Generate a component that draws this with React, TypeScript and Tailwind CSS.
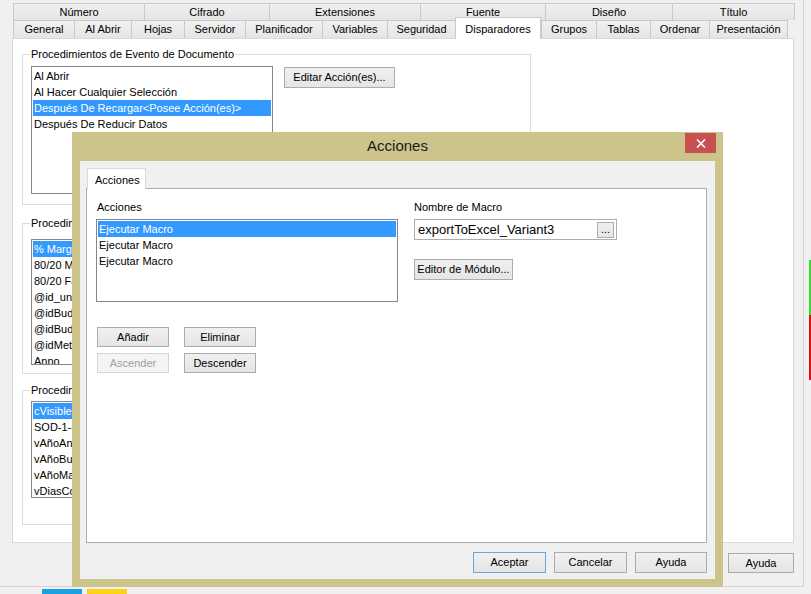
import React from "react";

const row1: [string, string][] = [
  ["Número", "w-[131px]"],
  ["Cifrado", "w-[125px]"],
  ["Extensiones", "w-[151px]"],
  ["Fuente", "w-[125px]"],
  ["Diseño", "w-[127px]"],
  ["Título", "w-[123px]"],
];

const row2: [string, string][] = [
  ["General", "w-[61px]"],
  ["Al Abrir", "w-[57px]"],
  ["Hojas", "w-[53px]"],
  ["Servidor", "w-[61px]"],
  ["Planificador", "w-[77px]"],
  ["Variables", "w-[65px]"],
  ["Seguridad", "w-[68px]"],
  ["Disparadores", "w-[86px]"],
  ["Grupos", "w-[55px]"],
  ["Tablas", "w-[54px]"],
  ["Ordenar", "w-[59px]"],
  ["Presentación", "w-[79px]"],
];

type BtnProps = {
  children: React.ReactNode;
  className?: string;
  disabled?: boolean;
  primary?: boolean;
};

function Btn({ children, className = "", disabled, primary }: BtnProps) {
  let look = "border-[#acacac] bg-linear-to-b from-[#f0f0f0] to-[#e5e5e5] text-black";
  if (disabled) look = "border-[#d5d5d5] bg-[#f4f4f4] text-[#a0a0a0]";
  if (primary) look = "border-[#6aa6e0] bg-linear-to-b from-[#f0f0f0] to-[#e5e5e5] text-black";
  return (
    <div className={`flex items-center justify-center border text-[11px] leading-none ${look} ${className}`}>
      {children}
    </div>
  );
}

// items starting with "*" are drawn selected
function ListBox({ items, className = "" }: { items: string[]; className?: string }) {
  return (
    <div className={`border border-[#828790] bg-white overflow-hidden p-px ${className}`}>
      {items.map((it, i) => (
        <div
          key={i}
          className={`h-[16px] leading-[16px] pl-[1px] whitespace-nowrap ${
            it.startsWith("*") ? "bg-[#3399ff] text-white" : ""
          }`}
        >
          {it.replace(/^\*/, "")}
        </div>
      ))}
    </div>
  );
}

function Group({ title, className = "", children }: { title: string; className?: string; children: React.ReactNode }) {
  return (
    <div className={`relative border border-[#dcdcdc] ${className}`}>
      <span className="absolute -top-[8px] left-[7px] bg-white px-[1px] leading-[14px] whitespace-nowrap">{title}</span>
      {children}
    </div>
  );
}

export default function App() {
  return (
    <div className="w-[811px] h-[594px] bg-[#f0f0f0] overflow-hidden relative text-[11px] text-black font-['Liberation_Sans',Arial,sans-serif]">
      <div className="flex h-[587px]">
        <div className="w-[804px] h-[587px] border-r border-b border-[#d4d4d4]">
          {/* tab headers */}
          <div className="pl-[13px] pt-[3px]">
            <div className="flex h-[17px]">
              {row1.map(([t, w], i) => (
                <div
                  key={t}
                  className={`${w} border-t border-l ${i === row1.length - 1 ? "border-r" : ""} border-[#c9c9c9] bg-linear-to-b from-[#f0f0f0] to-[#e5e5e5] flex items-center justify-center`}
                >
                  {t}
                </div>
              ))}
            </div>
            <div className="flex h-[18px] items-end">
              {row2.map(([t, w], i) =>
                t === "Disparadores" ? (
                  <div
                    key={t}
                    className={`${w} h-[22px] -mb-px relative z-10 bg-white border-t border-l border-r border-[#c9c9c9] flex items-start justify-center pt-[3px]`}
                  >
                    {t}
                  </div>
                ) : (
                  <div
                    key={t}
                    className={`${w} h-[18px] border-t border-l ${i === row2.length - 1 ? "border-r" : ""} border-[#c9c9c9] bg-linear-to-b from-[#f0f0f0] to-[#e5e5e5] flex items-center justify-center`}
                  >
                    {t}
                  </div>
                )
              )}
            </div>
          </div>

          {/* tab page */}
          <div className="ml-[12px] w-[782px] h-[505px] border border-[#d9d9d9] bg-white pl-[9px] pt-[15px]">
            <Group title="Procedimientos de Evento de Documento" className="w-[509px] h-[151px]">
              <div className="flex pl-[8px] pt-[11px] gap-[11px]">
                <ListBox
                  className="w-[242px] h-[128px]"
                  items={[
                    "Al Abrir",
                    "Al Hacer Cualquier Selección",
                    "*Después De Recargar<Posee Acción(es)>",
                    "Después De Reducir Datos",
                  ]}
                />
                <Btn className="w-[111px] h-[21px] mt-px">Editar Acción(es)...</Btn>
              </div>
            </Group>

            <Group title="Procedimientos" className="w-[509px] h-[151px] mt-[18px]">
              <div className="pl-[8px] pt-[15px]">
                <ListBox
                  className="w-[242px] h-[126px]"
                  items={[
                    "*% Margen",
                    "80/20 Margen",
                    "80/20 Facturación",
                    "@id_unidad",
                    "@idBudget",
                    "@idBudgetAnt",
                    "@idMetrica",
                    "Anno",
                  ]}
                />
              </div>
            </Group>

            <Group title="Procedimientos" className="w-[509px] h-[135px] mt-[16px]">
              <div className="pl-[8px] pt-[10px]">
                <ListBox
                  className="w-[242px] h-[97px]"
                  items={["*cVisible", "SOD-1-(Ventas)", "vAñoAnterior", "vAñoBudget", "vAñoMax", "vDiasCorridos"]}
                />
              </div>
            </Group>
          </div>

          <div className="w-[794px] flex justify-end mt-[10px]">
            <Btn className="w-[66px] h-[20px]">Ayuda</Btn>
          </div>
        </div>

        <div className="flex-1 flex flex-col items-end pt-[260px]">
          <div className="w-[2px] h-[55px] bg-[#3ddc3d]" />
          <div className="w-[2px] h-[65px] bg-[#e01010]" />
        </div>
      </div>

      <div className="h-[7px] flex items-end pl-[42px] gap-[5px]">
        <div className="w-[40px] h-[5px] bg-[#1ba1e2]" />
        <div className="w-[40px] h-[5px] bg-[#fcd116]" />
      </div>

      {/* Acciones dialog window */}
      <div className="absolute left-[72px] top-[132px] w-[651px] h-[455px] bg-[#cdc48b] flex flex-col">
        <div className="h-[29px] relative flex items-center justify-center text-[15px] text-[#1a1a1a]">
          Acciones
          <div className="absolute right-[7px] top-px w-[31px] h-[20px] bg-[#c75050] flex items-center justify-center">
            <svg width="10" height="9" viewBox="0 0 10 9">
              <path d="M1 0.5 L9 8.5 M9 0.5 L1 8.5" stroke="white" strokeWidth="1.6" />
            </svg>
          </div>
        </div>

        <div className="mx-[8px] h-[418px] bg-[#f0f0f0] pt-[7px] pl-[6px]">
          <div className="relative z-10 ml-px w-[59px] h-[21px] -mb-px bg-white border border-b-0 border-[#d9d9d9] pl-[7px] leading-[22px]">
            Acciones
          </div>
          <div className="w-[621px] h-[355px] bg-white border border-[#adadad] pl-[9px] pt-[11px] flex gap-[16px]">
            <div className="w-[302px]">
              <div className="h-[14px] leading-[14px] pl-px">Acciones</div>
              <ListBox
                className="w-[302px] h-[83px] mt-[5px]"
                items={["*Ejecutar Macro", "Ejecutar Macro", "Ejecutar Macro"]}
              />
              <div className="flex gap-[15px] mt-[25px] ml-px">
                <Btn className="w-[72px] h-[20px]">Añadir</Btn>
                <Btn className="w-[72px] h-[20px]">Eliminar</Btn>
              </div>
              <div className="flex gap-[15px] mt-[6px] ml-px">
                <Btn disabled className="w-[72px] h-[20px]">Ascender</Btn>
                <Btn className="w-[72px] h-[20px]">Descender</Btn>
              </div>
            </div>
            <div>
              <div className="h-[14px] leading-[14px]">Nombre de Macro</div>
              <div className="w-[203px] h-[21px] mt-[5px] border border-[#abadb3] bg-white flex items-center justify-between pl-[3px] pr-[2px]">
                <span className="text-[13px] leading-none">exportToExcel_Variant3</span>
                <Btn className="w-[17px] h-[16px] text-[9px]">...</Btn>
              </div>
              <Btn className="w-[99px] h-[21px] mt-[19px]">Editor de Módulo...</Btn>
            </div>
          </div>
          <div className="w-[621px] flex justify-end gap-[8px] mt-[9px]">
            <Btn primary className="w-[73px] h-[21px]">Aceptar</Btn>
            <Btn className="w-[73px] h-[21px]">Cancelar</Btn>
            <Btn className="w-[72px] h-[21px]">Ayuda</Btn>
          </div>
        </div>
      </div>
    </div>
  );
}
